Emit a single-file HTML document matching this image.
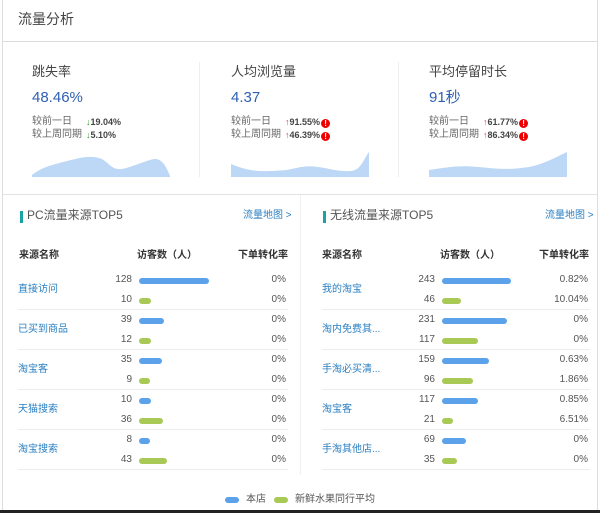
<!DOCTYPE html>
<html><head><meta charset="utf-8"><style>
*{margin:0;padding:0;box-sizing:border-box}
body{width:600px;height:513px;background:#fff;font-family:"Liberation Sans","Noto Sans CJK SC",sans-serif;position:relative;overflow:hidden;color:#333}
.a{position:absolute;white-space:nowrap;line-height:1.2}
.t{font-size:13px;color:#444}
.v{font-size:15px;color:#2f5fb3}
.c{font-size:10px;color:#666}
.p{font-size:9px;font-weight:bold;color:#444}
.dn{color:#2a9a2a}.up{color:#e33}
.bang{display:inline-block;width:9px;height:9px;border-radius:50%;background:#e00;color:#fff;font-size:8px;line-height:9px;text-align:center;vertical-align:-1px;margin-left:1px}
.hd{font-size:10px;font-weight:bold;color:#333}
.nm{font-size:10px;color:#2a7fc0}
.n{font-size:10px;color:#555;text-align:right;width:30px}
.pc{font-size:10px;color:#555;text-align:right;width:60px}
.b{position:absolute;height:6px;border-radius:3px}
.bl{background:#5ba2ea}.gr{background:#a9c957}
.hl{position:absolute;height:1px;background:#ececec}
</style></head><body>
<div class="a" style="left:2px;top:0;width:1px;height:513px;background:#ddd"></div>
<div class="a" style="left:597px;top:0;width:1px;height:513px;background:#ddd"></div>
<div class="a" style="left:18px;top:11px;font-size:14px;color:#444">流量分析</div>
<div class="a" style="left:2px;top:41px;width:596px;height:1px;background:#ddd"></div>
<div class="a" style="left:199px;top:62px;width:1px;height:115px;background:#eee"></div>
<div class="a" style="left:398px;top:62px;width:1px;height:115px;background:#eee"></div>

<div class="a t" style="left:32px;top:64px">跳失率</div>
<div class="a v" style="left:32px;top:89px">48.46%</div>
<div class="a c" style="left:32px;top:116px">较前一日</div>
<div class="a c" style="left:32px;top:129px">较上周同期</div>
<div class="a p" style="left:86px;top:117px"><span class="dn">↓</span>19.04%</div>
<div class="a p" style="left:86px;top:130px"><span class="dn">↓</span>5.10%</div>
<svg class="a" style="left:32px;top:150px" width="138" height="27"><path d="M0 25 C10 17,20 15,35 11 C50 7,60 5,70 9 C78 14,80 20,90 19 C100 17,110 12,118 10 C126 7,132 10,138 26 L138 27 L0 27Z" fill="#bcd8f6"/></svg>

<div class="a t" style="left:231px;top:64px">人均浏览量</div>
<div class="a v" style="left:231px;top:89px">4.37</div>
<div class="a c" style="left:231px;top:116px">较前一日</div>
<div class="a c" style="left:231px;top:129px">较上周同期</div>
<div class="a p" style="left:285px;top:117px"><span class="up">↑</span>91.55%<span class="bang">!</span></div>
<div class="a p" style="left:285px;top:130px"><span class="up">↑</span>46.39%<span class="bang">!</span></div>
<svg class="a" style="left:231px;top:150px" width="138" height="27"><path d="M0 14 C10 18,20 22,40 21 C60 20,55 20,70 17 C90 14,100 22,120 21 C130 20,132 10,138 2 L138 27 L0 27Z" fill="#bcd8f6"/></svg>

<div class="a t" style="left:429px;top:64px">平均停留时长</div>
<div class="a v" style="left:429px;top:89px">91秒</div>
<div class="a c" style="left:429px;top:116px">较前一日</div>
<div class="a c" style="left:429px;top:129px">较上周同期</div>
<div class="a p" style="left:483px;top:117px"><span class="up">↑</span>61.77%<span class="bang">!</span></div>
<div class="a p" style="left:483px;top:130px"><span class="up">↑</span>86.34%<span class="bang">!</span></div>
<svg class="a" style="left:429px;top:150px" width="138" height="27"><path d="M0 20 C20 17,30 15,50 17 C70 19,80 20,100 17 C115 14,125 8,138 2 L138 27 L0 27Z" fill="#bcd8f6"/></svg>

<div class="a" style="left:2px;top:194px;width:596px;height:1px;background:#e2e2e2"></div>
<div class="a" style="left:300px;top:195px;width:1px;height:280px;background:#f0f0f0"></div>

<div class="a" style="left:20px;top:211px;width:3px;height:12px;background:#1aa3a3"></div>
<div class="a" style="left:27px;top:208px;font-size:12px;color:#555">PC流量来源TOP5</div>
<div class="a" style="left:243px;top:210px;font-size:10px;color:#2a7fc0">流量地图 &gt;</div>
<div class="a hd" style="left:19px;top:250px">来源名称</div>
<div class="a hd" style="left:137px;top:250px">访客数（人）</div>
<div class="a hd" style="left:238px;top:250px">下单转化率</div>

<div class="a" style="left:323px;top:211px;width:3px;height:12px;background:#1aa3a3"></div>
<div class="a" style="left:330px;top:208px;font-size:12px;color:#555">无线流量来源TOP5</div>
<div class="a" style="left:545px;top:210px;font-size:10px;color:#2a7fc0">流量地图 &gt;</div>
<div class="a hd" style="left:322px;top:250px">来源名称</div>
<div class="a hd" style="left:440px;top:250px">访客数（人）</div>
<div class="a hd" style="left:539px;top:250px">下单转化率</div>

<div id="rows"></div>
<script>
var L=[["直接访问",128,10,"0%","0%",70,12],["已买到商品",39,12,"0%","0%",25,12],["淘宝客",35,9,"0%","0%",23,11],["天猫搜索",10,36,"0%","0%",12,24],["淘宝搜索",8,43,"0%","0%",11,28]];
var R=[["我的淘宝",243,46,"0.82%","10.04%",69,19],["淘内免费其...",231,117,"0%","0%",65,36],["手淘必买清...",159,96,"0.63%","1.86%",47,31],["淘宝客",117,21,"0.85%","6.51%",36,11],["手淘其他店...",69,35,"0%","0%",24,15]];
var h="";
function tb(d,x0,nx,bx,px,w){d.forEach(function(r,i){var y=274+i*40;
h+='<div class="a nm" style="left:'+x0+'px;top:'+(y+10)+'px">'+r[0]+'</div>';
h+='<div class="a n" style="left:'+(nx-30)+'px;top:'+(y)+'px">'+r[1]+'</div>';
h+='<div class="a n" style="left:'+(nx-30)+'px;top:'+(y+20)+'px">'+r[2]+'</div>';
h+='<div class="b bl" style="left:'+bx+'px;top:'+(y+4)+'px;width:'+r[5]+'px"></div>';
h+='<div class="b gr" style="left:'+bx+'px;top:'+(y+24)+'px;width:'+r[6]+'px"></div>';
h+='<div class="a pc" style="left:'+(px-60)+'px;top:'+(y)+'px">'+r[3]+'</div>';
h+='<div class="a pc" style="left:'+(px-60)+'px;top:'+(y+20)+'px">'+r[4]+'</div>';
h+='<div class="hl" style="left:'+(x0)+'px;top:'+(y+35)+'px;width:'+w+'px"></div>';});}
tb(L,18,132,139,286,270);tb(R,322,435,442,588,268);
document.getElementById("rows").innerHTML=h;
</script>

<div class="b bl" style="left:225px;top:497px;width:14px;height:6px"></div>
<div class="a" style="left:246px;top:494px;font-size:10px;color:#555">本店</div>
<div class="b gr" style="left:274px;top:497px;width:14px;height:6px"></div>
<div class="a" style="left:295px;top:494px;font-size:10px;color:#555">新鲜水果同行平均</div>
<div class="a" style="left:0;top:510px;width:600px;height:3px;background:#222"></div>
</body></html>
